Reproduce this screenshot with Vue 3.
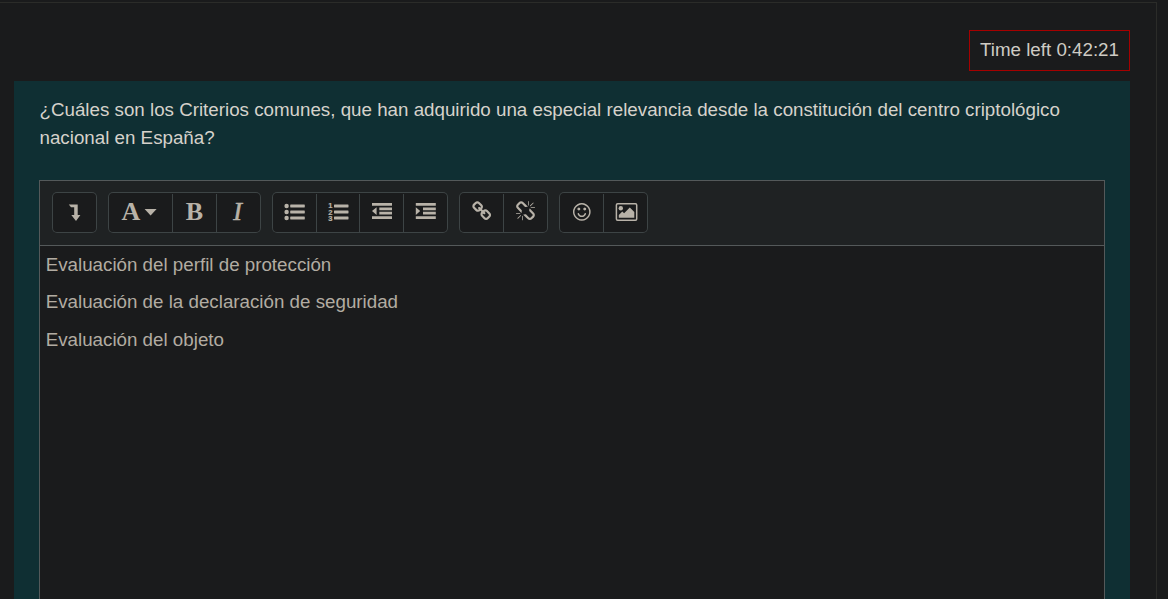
<script setup>
const unit = 20.6 / 1792

const place = (x, y) => `translate(${x} ${y}) scale(${unit}) translate(-896 -896)`

const lines = [
  'Evaluación del perfil de protección',
  'Evaluación de la declaración de seguridad',
  'Evaluación del objeto',
]

const groups = [
  [{ name: 'toggle', label: 'Show more buttons', x: 52, w: 45 }],
  [
    { name: 'style', label: 'Paragraph styles', x: 108, w: 64 },
    { name: 'bold', label: 'Bold', x: 172, w: 44 },
    { name: 'italic', label: 'Italic', x: 216, w: 45 },
  ],
  [
    { name: 'ul', label: 'Unordered list', x: 272, w: 44 },
    { name: 'ol', label: 'Ordered list', x: 316, w: 43 },
    { name: 'outdent', label: 'Outdent', x: 359, w: 44 },
    { name: 'indent', label: 'Indent', x: 403, w: 45 },
  ],
  [
    { name: 'link', label: 'Link', x: 459, w: 44 },
    { name: 'unlink', label: 'Unlink', x: 503, w: 45 },
  ],
  [
    { name: 'smile', label: 'Emoji picker', x: 559, w: 44 },
    { name: 'image', label: 'Insert image', x: 603, w: 45 },
  ],
]

const linkPath = 'M1520 1216q0-40-28-68l-208-208q-28-28-68-28-42 0-72 32 3 3 19 18.5t21.5 21.5 15 19 13 25.5 3.5 27.5q0 40-28 68t-68 28q-15 0-27.5-3.5t-25.5-13-19-15-21.5-21.5-18.5-19q-33 31-33 73 0 40 28 68l206 207q27 27 68 27 40 0 68-26l147-146q28-28 28-67zm-703-705q0-40-28-68l-206-207q-28-28-68-28-39 0-68 27l-147 146q-28 28-28 67 0 40 28 68l208 208q27 27 68 27 42 0 72-31-3-3-19-18.5t-21.5-21.5-15-19-13-25.5-3.5-27.5q0-40 28-68t68-28q15 0 27.5 3.5t25.5 13 19 15 21.5 21.5 18.5 19q33-31 33-73zm895 705q0 120-85 203l-147 146q-83 83-203 83-121 0-204-85l-206-207q-83-83-83-203 0-123 88-209l-88-88q-86 88-208 88-120 0-204-84l-208-208q-84-84-84-204t85-203l147-146q83-83 203-83 121 0 204 85l206 207q83 83 83 203 0 123-88 209l88 88q86-88 208-88 120 0 204 84l208 208q84 84 84 204z'
const unlinkPath = 'M503 1271l-256 256q-10 9-23 9-12 0-23-9-9-10-9-23t9-23l256-256q10-9 23-9t23 9q9 10 9 23t-9 23zm169 41v320q0 14-9 23t-23 9-23-9-9-23v-320q0-14 9-23t23-9 23 9 9 23zm-224-224q0 14-9 23t-23 9h-320q-14 0-23-9t-9-23 9-23 23-9h320q14 0 23 9t9 23zm1264 128q0 120-85 203l-147 146q-83 83-203 83-121 0-204-85l-334-335q-21-21-42-56l239-18 273 274q28 28 68 27.5t68-27.5l147-146q28-28 28-67 0-40-28-68l-274-275 18-239q35 21 56 42l336 336q84 86 84 204zm-617-724l-239 18-273-274q-28-28-68-28-39 0-68 27l-147 146q-28 28-28 67 0 40 28 68l274 274-18 240q-35-21-56-42l-336-336q-84-86-84-204 0-120 85-203l147-146q83-83 203-83 121 0 204 85l334 335q21 21 42 56zm633 84q0 14-9 23t-23 9h-320q-14 0-23-9t-9-23 9-23 23-9h320q14 0 23 9t9 23zm-544-544v320q0 14-9 23t-23 9-23-9-9-23v-320q0-14 9-23t23-9 23 9 9 23zm407 151l-256 256q-11 9-23 9t-23-9q-9-10-9-23t9-23l256-256q10-9 23-9t23 9q9 10 9 23t-9 23z'
const smilePath = 'M1262 1075q-37 121-138 195t-228 74-228-74-138-195q-8-25 4-48.5t38-31.5q25-8 48.5 4t31.5 38q25 80 92.5 129.5t151.5 49.5 151.5-49.5 92.5-129.5q8-26 32-38t49-4 37 31.5 4 48.5zm-494-435q0 53-37.5 90.5t-90.5 37.5-90.5-37.5-37.5-90.5 37.5-90.5 90.5-37.5 90.5 37.5 37.5 90.5zm512 0q0 53-37.5 90.5t-90.5 37.5-90.5-37.5-37.5-90.5 37.5-90.5 90.5-37.5 90.5 37.5 37.5 90.5zm256 256q0-130-51-248.5t-136.5-204-204-136.5-248.5-51-248.5 51-204 136.5-136.5 204-51 248.5 51 248.5 136.5 204 204 136.5 248.5 51 248.5-51 204-136.5 136.5-204 51-248.5zm128 0q0 209-103 385.5t-279.5 279.5-385.5 103-385.5-103-279.5-279.5-103-385.5 103-385.5 279.5-279.5 385.5-103 385.5 103 279.5 279.5 103 385.5z'
</script>

<template>
  <div class="page">
    <main class="card">
      <div class="timer-row">
        <div class="timer">Time left 0:42:21</div>
      </div>
      <section class="question">
        <p class="prompt">¿Cuáles son los Criterios comunes, que han adquirido una especial relevancia desde la constitución del centro criptológico nacional en España?</p>
        <div class="editor">
          <div class="toolbar">
            <div v-for="(group, g) in groups" :key="g" class="group">
              <button v-for="b in group" :key="b.name" type="button" class="tool" :aria-label="b.label">
                <svg :width="b.w" height="41" :viewBox="`${b.x} 192 ${b.w} 41`">
                  <path v-if="b.name === 'toggle'" d="M68.8 204.5H77.7V215H80.4L76 221L71.3 215H74.2V207.3H71Z" />
                  <template v-else-if="b.name === 'style'">
                    <text x="121.4" y="220" class="letter">A</text>
                    <path d="M144.6 209H156.6L150.6 215.4Z" />
                  </template>
                  <text v-else-if="b.name === 'bold'" x="185.7" y="220" class="letter">B</text>
                  <text v-else-if="b.name === 'italic'" x="233.2" y="220" class="letter slanted">I</text>
                  <template v-else-if="b.name === 'ul'">
                    <g v-for="y in [206, 212, 218]" :key="y">
                      <circle cx="286.6" :cy="y" r="2.2" />
                      <rect x="290.2" :y="y - 1.5" width="14.6" height="3" rx=".4" />
                    </g>
                  </template>
                  <template v-else-if="b.name === 'ol'">
                    <g v-for="n in 3" :key="n">
                      <text x="328.3" :y="200.9 + n * 6.85" class="digit">{{ n }}</text>
                      <rect x="334" :y="198.5 + n * 6" width="14.5" height="3" rx=".4" />
                    </g>
                  </template>
                  <path v-else-if="b.name === 'outdent'" d="M372 203h20v2.8h-20zM379.3 207.4H392v2.8h-12.7zM379.3 211.8H392v2.8h-12.7zM372 216.2h20v2.8h-20zM376.6 207.2v7.8L372 211.1z" />
                  <path v-else-if="b.name === 'indent'" d="M415.8 203h20v2.8h-20zM423 207.4H435.8v2.8h-12.8zM423 211.8H435.8v2.8h-12.8zM415.8 216.2h20v2.8h-20zM415.8 207.2v7.8L420.2 211.1z" />
                  <path v-else-if="b.name === 'link'" :transform="place(481.7, 211.3)" :d="linkPath" />
                  <path v-else-if="b.name === 'unlink'" :transform="place(525.5, 211.4)" :d="unlinkPath" />
                  <path v-else-if="b.name === 'smile'" :transform="place(581.8, 211.9)" :d="smilePath" />
                  <template v-else>
                    <rect x="616.4" y="203.7" width="20.3" height="16.6" rx="1.2" fill="none" stroke="#b8b2a8" stroke-width="1.5" />
                    <circle cx="620.8" cy="208.3" r="2.2" />
                    <path d="M618.8 217.8V215L622.3 211.5L624.1 213.3L629.8 207.6L634.3 212.1V217.8Z" />
                  </template>
                </svg>
              </button>
            </div>
          </div>
          <div class="content">
            <p v-for="line in lines" :key="line">{{ line }}</p>
          </div>
        </div>
      </section>
    </main>
  </div>
</template>

<style>
body { background: #1a1b1c; }
</style>

<style scoped>
* { box-sizing: border-box; }
.page {
  height: 599px;
  overflow: hidden;
  padding: 2px 11px 0 0;
  background: #1a1b1c;
  font: 18.75px/28.125px "Liberation Sans", Arial, sans-serif;
}
.card {
  display: flex;
  flex-direction: column;
  height: 620px;
  padding: 27px 26px 0 14px;
  border: solid #2b2c29;
  border-width: 1px 1px 0 0;
}
.timer-row { display: flex; justify-content: flex-end; }
.timer {
  width: 161px;
  height: 41px;
  padding: 5px 0 0 10px;
  border: 1px solid #a60000;
  color: #cfcbc4;
  white-space: nowrap;
}
.question {
  flex: 1;
  display: flex;
  flex-direction: column;
  margin-top: 10px;
  padding: 15px 25px 0;
  background: #0f2f33;
}
.prompt { margin: 0; height: 84px; padding-left: .5px; color: #d6d2cb; }
.editor {
  flex: 1;
  border: 1px solid #54595a;
  background: #1a1b1c;
}
.toolbar {
  display: flex;
  gap: 11px;
  height: 65px;
  padding: 11px 12px 0;
  background: #1f2223;
  border-bottom: 1px solid #54595a;
}
.group {
  display: flex;
  height: 41px;
  border-radius: 5px;
  background: #1a1b1c;
  box-shadow: inset 0 0 0 1px #3d4445;
}
.tool { display: block; padding: 0; border: 0; background: none; }
.tool + .tool {
  background: linear-gradient(#3d4445, #3d4445) 0 2px / 1px 38px no-repeat;
}
.tool svg { display: block; fill: #b8b2a8; }
.letter { font: bold 26px "Liberation Serif", serif; }
.slanted { font-weight: 400; font-style: italic; stroke: #b8b2a8; stroke-width: .6px; }
.digit { font: bold 7.6px "Liberation Sans", sans-serif; stroke: #b8b2a8; stroke-width: .2px; }
.content { padding: 4.8px 5.7px; color: #b2aca2; }
.content p { margin: 0 0 9.375px; }
</style>
